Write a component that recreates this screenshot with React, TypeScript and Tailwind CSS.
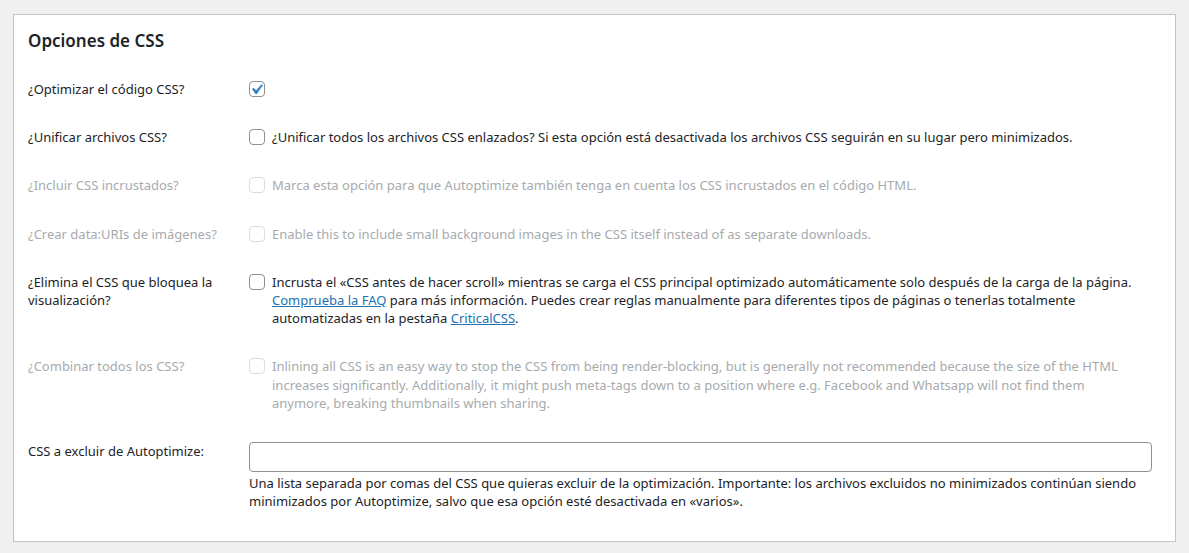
import React from "react";

const font = { fontFamily: '"Noto Sans", "Open Sans", sans-serif' };

function Check({ checked = false, disabled = false }: { checked?: boolean; disabled?: boolean }) {
  return (
    <span
      className={`relative mt-[1px] block h-4 w-4 shrink-0 rounded-[4px] border bg-white ${
        disabled ? "border-[#dcdcde]" : "border-[#8c8f94]"
      }`}
    >
      {checked && (
        <svg viewBox="0 0 20 20" className="absolute left-[-4px] top-[-3px] h-[21px] w-[21px]" aria-hidden>
          <path d="M14.83 4.89l1.34.94-5.81 8.38H9.02L5.78 9.67l1.34-1.25 2.57 2.4z" fill="#3582c4" />
        </svg>
      )}
    </span>
  );
}

function Row({
  label,
  disabled = false,
  children,
}: {
  label: React.ReactNode;
  disabled?: boolean;
  children: React.ReactNode;
}) {
  return (
    <div className="flex py-[15px]">
      <div className={`w-[221px] shrink-0 pr-[10px] ${disabled ? "text-[#a7aaad]" : "text-[#1d2327]"}`}>{label}</div>
      <div className={`min-w-0 flex-1 ${disabled ? "text-[#a7aaad]" : "text-[#1d2327]"}`}>{children}</div>
    </div>
  );
}

function CheckRow({ checked, disabled, children }: { checked?: boolean; disabled?: boolean; children?: React.ReactNode }) {
  return (
    <div className="flex items-start gap-[7px]">
      <Check checked={checked} disabled={disabled} />
      {children && <div>{children}</div>}
    </div>
  );
}

export default function App() {
  return (
    <div className="min-h-[553px] bg-[#f0f0f1] px-[13px] pt-[14px] pb-[11px]" style={font}>
      <div className="border border-[#c3c4c7] bg-white pl-[14px] pr-[24px] pt-[14px] pb-[16px] text-[13px] leading-[1.4]">
        <h2 className="text-[17px] font-semibold leading-[24px] text-[#1d2327]">Opciones de CSS</h2>
        <div className="mt-[12px]">
          <Row label="¿Optimizar el código CSS?">
            <CheckRow checked />
          </Row>
          <Row label="¿Unificar archivos CSS?">
            <CheckRow>
              ¿Unificar todos los archivos CSS enlazados? Si esta opción está desactivada los archivos CSS seguirán en su
              lugar pero minimizados.
            </CheckRow>
          </Row>
          <Row label="¿Incluir CSS incrustados?" disabled>
            <CheckRow disabled>
              Marca esta opción para que Autoptimize también tenga en cuenta los CSS incrustados en el código HTML.
            </CheckRow>
          </Row>
          <Row label="¿Crear data:URIs de imágenes?" disabled>
            <CheckRow disabled>
              Enable this to include small background images in the CSS itself instead of as separate downloads.
            </CheckRow>
          </Row>
          <Row
            label={
              <>
                ¿Elimina el CSS que bloquea la
                <br />
                visualización?
              </>
            }
          >
            <CheckRow>
              Incrusta el «CSS antes de hacer scroll» mientras se carga el CSS principal optimizado automáticamente solo
              después de la carga de la página.
              <br />
              <a href="#" className="text-[#2271b1] underline">
                Comprueba la FAQ
              </a>{" "}
              para más información. Puedes crear reglas manualmente para diferentes tipos de páginas o tenerlas
              totalmente
              <br />
              automatizadas en la pestaña{" "}
              <a href="#" className="text-[#2271b1] underline">
                CriticalCSS
              </a>
              .
            </CheckRow>
          </Row>
          <Row label="¿Combinar todos los CSS?" disabled>
            <CheckRow disabled>
              Inlining all CSS is an easy way to stop the CSS from being render-blocking, but is generally not
              recommended because the size of the HTML
              <br />
              increases significantly. Additionally, it might push meta-tags down to a position where e.g. Facebook and
              Whatsapp will not find them
              <br />
              anymore, breaking thumbnails when sharing.
            </CheckRow>
          </Row>
          <div className="flex py-[15px]">
            <div className="w-[221px] shrink-0 pr-[10px] text-[#1d2327]">CSS a excluir de Autoptimize:</div>
            <div className="min-w-0 flex-1 text-[#1d2327]">
              <input
                type="text"
                className="block h-[30px] w-[903px] rounded-[4px] border border-[#8c8f94] bg-white px-2 outline-none"
              />
              <p className="mt-[2px]">
                Una lista separada por comas del CSS que quieras excluir de la optimización. Importante: los archivos
                excluidos no minimizados continúan siendo
                <br />
                minimizados por Autoptimize, salvo que esa opción esté desactivada en «varios».
              </p>
            </div>
          </div>
        </div>
      </div>
    </div>
  );
}
